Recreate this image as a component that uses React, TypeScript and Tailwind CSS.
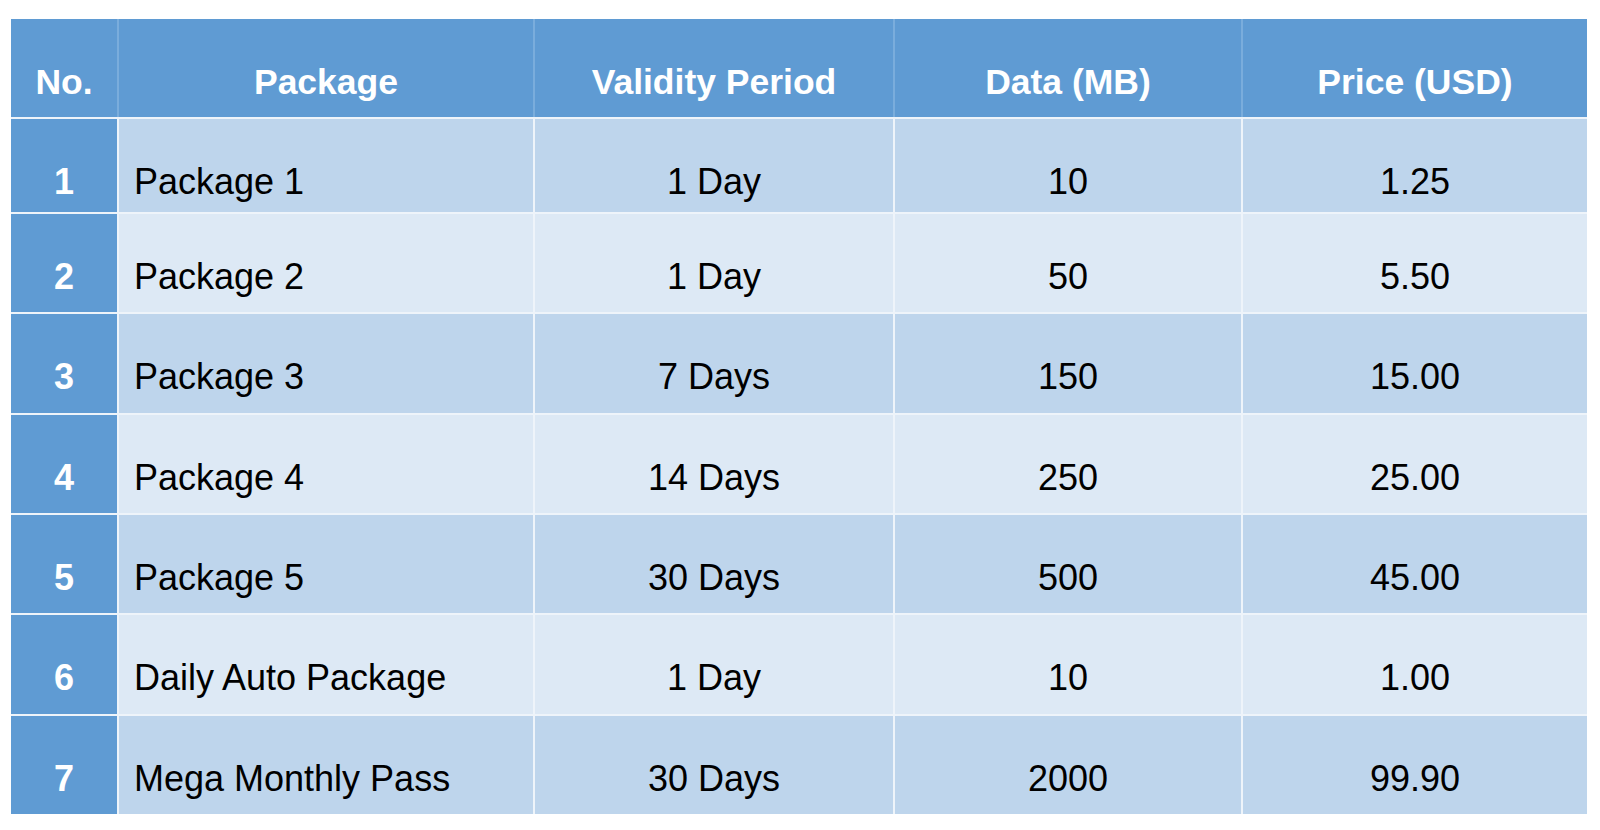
import React from "react";

const columns = [
  { label: "No.", width: "w-[106px]" },
  { label: "Package", width: "w-[414px]" },
  { label: "Validity Period", width: "w-[358px]" },
  { label: "Data (MB)", width: "w-[346px]" },
  { label: "Price (USD)", width: "w-[344px]" },
];

const rows = [
  { no: 1, name: "Package 1", validity: "1 Day", data: "10", price: "1.25", h: "h-[93px]" },
  { no: 2, name: "Package 2", validity: "1 Day", data: "50", price: "5.50", h: "h-[98px]" },
  { no: 3, name: "Package 3", validity: "7 Days", data: "150", price: "15.00", h: "h-[99px]" },
  { no: 4, name: "Package 4", validity: "14 Days", data: "250", price: "25.00", h: "h-[98px]" },
  { no: 5, name: "Package 5", validity: "30 Days", data: "500", price: "45.00", h: "h-[98px]" },
  { no: 6, name: "Daily Auto Package", validity: "1 Day", data: "10", price: "1.00", h: "h-[99px]" },
  { no: 7, name: "Mega Monthly Pass", validity: "30 Days", data: "2000", price: "99.90", h: "h-[98px]" },
];

const App = () => {
  return (
    <div
      className="min-h-screen bg-white px-[11px] pt-[19px]"
      style={{ fontFamily: '"Liberation Sans", Arial, sans-serif' }}
    >
      <div className="flex w-[1576px] flex-col gap-[2px] bg-[#eef4fa]">
        {/* header */}
        <div className="flex h-[98px] gap-[2px] bg-[#7aaddc]">
          {columns.map((c) => (
            <div
              key={c.label}
              className={`${c.width} bg-[#5f9bd3] pt-[46px] text-center text-[35.5px] font-bold leading-[35px] text-white`}
            >
              {c.label}
            </div>
          ))}
        </div>

        {rows.map((r) => {
          const shade = r.no % 2 === 1 ? "bg-[#bed5ec]" : "bg-[#dde9f5]";
          return (
            <div key={r.no} className={`flex ${r.h} gap-[2px]`}>
              <div className="w-[106px] bg-[#5f9bd3] pt-[45px] text-center text-[36px] font-bold leading-[36px] text-white">
                {r.no}
              </div>
              <div className={`w-[414px] ${shade} pl-[15px] pt-[45px] text-[36px] leading-[36px] text-black`}>
                {r.name}
              </div>
              <div className={`w-[358px] ${shade} pt-[45px] text-center text-[36px] leading-[36px] text-black`}>
                {r.validity}
              </div>
              <div className={`w-[346px] ${shade} pt-[45px] text-center text-[36px] leading-[36px] text-black`}>
                {r.data}
              </div>
              <div className={`w-[344px] ${shade} pt-[45px] text-center text-[36px] leading-[36px] text-black`}>
                {r.price}
              </div>
            </div>
          );
        })}
      </div>
    </div>
  );
};

export default App;
